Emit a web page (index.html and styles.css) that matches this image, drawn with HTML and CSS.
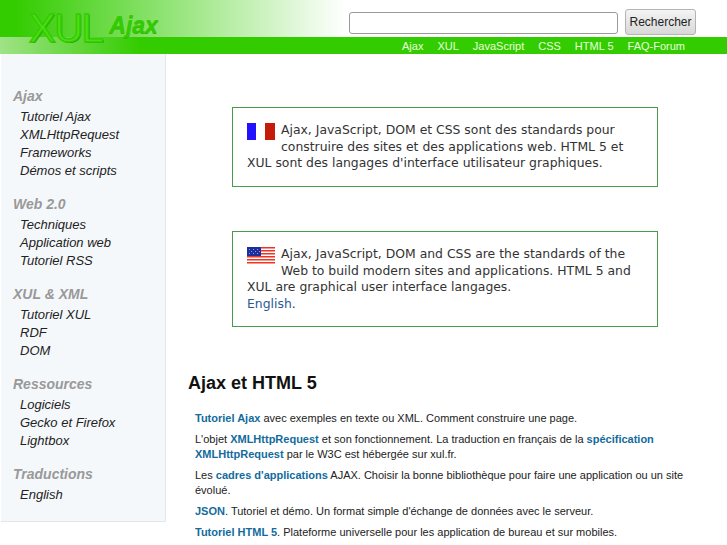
FILE: index.html
```html
<!DOCTYPE html>
<html lang="fr">
<head>
<meta charset="utf-8">
<title>XUL Ajax</title>
<link rel="stylesheet" href="styles.css">
</head>
<body>
<header class="header">
  <div class="top">
    <div class="logo"><span class="logo-xul">XUL</span><span class="logo-ajax">Ajax</span></div>
    <form class="search"><input class="search-input" type="text"><button class="search-btn" type="button">Rechercher</button></form>
  </div>
  <nav class="menu">
    <a href="#">Ajax</a><a href="#">XUL</a><a href="#">JavaScript</a><a href="#">CSS</a><a href="#">HTML 5</a><a href="#">FAQ-Forum</a>
  </nav>
</header>
<div class="page">
  <aside class="side">
    <h3>Ajax</h3>
    <ul><li>Tutoriel Ajax</li><li>XMLHttpRequest</li><li>Frameworks</li><li>Démos et scripts</li></ul>
    <h3>Web 2.0</h3>
    <ul><li>Techniques</li><li>Application web</li><li>Tutoriel RSS</li></ul>
    <h3>XUL &amp; XML</h3>
    <ul><li>Tutoriel XUL</li><li>RDF</li><li>DOM</li></ul>
    <h3>Ressources</h3>
    <ul><li>Logiciels</li><li>Gecko et Firefox</li><li>Lightbox</li></ul>
    <h3>Traductions</h3>
    <ul><li>English</li></ul>
  </aside>
  <main class="main">
    <div class="box box-fr">
      <svg class="flag" viewBox="0 0 28 17"><rect x="0" width="9" height="17" fill="#2211ff"/><rect x="18" width="10" height="17" fill="#c41c08"/></svg>
      Ajax, JavaScript, DOM et CSS sont des standards pour construire des sites et des applications web. HTML 5 et XUL sont des langages d'interface utilisateur graphiques.
    </div>
    <div class="box box-en">
      <svg class="flag" viewBox="0 0 28 17"><rect width="28" height="17" fill="#fff"/><g fill="#ee3322"><rect y="0" width="28" height="1.5"/><rect y="3" width="28" height="1.5"/><rect y="6" width="28" height="1.5"/><rect y="9" width="28" height="1.5"/><rect y="12" width="28" height="1.5"/><rect y="15" width="28" height="1.5"/></g><rect width="14" height="9" fill="#1c2f9c"/><g fill="#8f9be0"><rect x="2" y="2" width="1" height="1"/><rect x="6" y="2" width="1" height="1"/><rect x="10" y="2" width="1" height="1"/><rect x="4" y="4" width="1" height="1"/><rect x="8" y="4" width="1" height="1"/><rect x="12" y="4" width="1" height="1"/><rect x="2" y="6" width="1" height="1"/><rect x="6" y="6" width="1" height="1"/><rect x="10" y="6" width="1" height="1"/></g></svg>
      Ajax, JavaScript, DOM and CSS are the standards of the Web to build modern sites and applications. HTML 5 and XUL are graphical user interface langages.<br><a class="box-link" href="#">English</a>.
    </div>
    <h1 class="title">Ajax et HTML 5</h1>
    <div class="list">
      <p><a href="#">Tutoriel Ajax</a> avec exemples en texte ou XML. Comment construire une page.</p>
      <p>L'objet <a href="#">XMLHttpRequest</a> et son fonctionnement. La traduction en français de la <a href="#">spécification XMLHttpRequest</a> par le W3C est hébergée sur xul.fr.</p>
      <p>Les <a href="#">cadres d'applications</a> AJAX. Choisir la bonne bibliothèque pour faire une application ou un site évolué.</p>
      <p><a href="#">JSON</a>. Tutoriel et démo. Un format simple d'échange de données avec le serveur.</p>
      <p><a href="#">Tutoriel HTML 5</a>. Plateforme universelle pour les application de bureau et sur mobiles.</p>
    </div>
  </main>
</div>
</body>
</html>
```
FILE: styles.css
```css
html, body { margin: 0; padding: 0; height: 545px; overflow: hidden; background: #fff; }
body { font-family: "Liberation Sans", Arial, sans-serif; color: #222; }
.top {
  position: relative;
  z-index: 1;
  height: 37px;
  display: flex;
  justify-content: space-between;
  background: linear-gradient(to right, #33cc00 15px, #ffffff 345px);
}
.logo { display: flex; align-items: flex-start; padding-left: 29px; height: 37px; }
.logo-xul {
  margin-top: 5px;
  font-size: 40px;
  line-height: 46px;
  letter-spacing: -1.5px;
  color: #48e212;
  -webkit-text-stroke: 1.4px #35ca04;
  text-shadow: 1px 1px 0 #1f9c00;
}
.logo-ajax {
  margin: 12px 0 0 7px;
  font-size: 23px;
  line-height: 26px;
  font-weight: bold;
  font-style: italic;
  color: #33cc00;
  text-shadow: 0 1px 0 #2fb808;
}
.search { display: flex; align-items: flex-start; gap: 7px; padding: 9px 31px 0 0; }
.search-input {
  box-sizing: border-box;
  width: 269px;
  height: 22px;
  margin: 3px 0 0;
  border: 1px solid #9a9a9a;
  border-radius: 3px;
  background: #fff;
  padding: 0 4px;
}
.search-btn {
  box-sizing: border-box;
  width: 71px;
  height: 26px;
  margin: 0;
  padding: 0;
  font: 12px "Liberation Sans", Arial, sans-serif;
  color: #222;
  border: 1px solid #b4b4b4;
  border-radius: 3px;
  background: linear-gradient(#f4f4f4, #d8d8d8);
}
.menu {
  height: 17px;
  display: flex;
  justify-content: flex-end;
  align-items: center;
  gap: 14px;
  padding-right: 42px;
  background: linear-gradient(to right, #9fe386 0, #33cc00 140px);
  font-size: 11px;
}
.menu a { color: #eaffdd; text-decoration: none; }
.page { display: flex; align-items: flex-start; }
.side {
  box-sizing: border-box;
  width: 165px;
  height: 468px;
  margin-left: 1px;
  padding: 33px 0 0 12px;
  background: #f5f8fb;
  border-right: 1px solid #e6e6e6;
  border-bottom: 1px solid #e6e6e6;
}
.side h3 {
  margin: 0 0 3px;
  font-size: 14px;
  line-height: 18px;
  font-style: italic;
  font-weight: bold;
  color: #999;
}
.side ul { margin: 0 0 15px; padding: 0 0 0 7px; list-style: none; }
.side li { font-size: 13px; line-height: 18px; font-style: italic; color: #222; }
.main { flex: 1; padding: 53px 0 0 22px; min-width: 0; }
.box {
  box-sizing: border-box;
  width: 426px;
  margin-left: 44px;
  padding: 14px 14px 14px 14px;
  border: 1px solid #4b9a4b;
  font: 12.4px/16.5px "DejaVu Sans", Verdana, sans-serif;
  color: #333;
}
.box-fr { height: 80px; margin-bottom: 44px; }
.box-en { height: 96px; margin-bottom: 45px; }
.flag { float: left; width: 28px; height: 17px; margin: 1px 6px 0 0; }
.box-link { color: #2a5a90; text-decoration: none; }
.title { margin: 0 0 17px; font-size: 18px; line-height: 22px; font-weight: bold; color: #111; }
.list { padding-left: 7px; width: 500px; }
.list p { margin: 0 0 6px; font-size: 11px; line-height: 15px; color: #222; }
.list a { color: #126b9c; font-weight: bold; text-decoration: none; }
```
